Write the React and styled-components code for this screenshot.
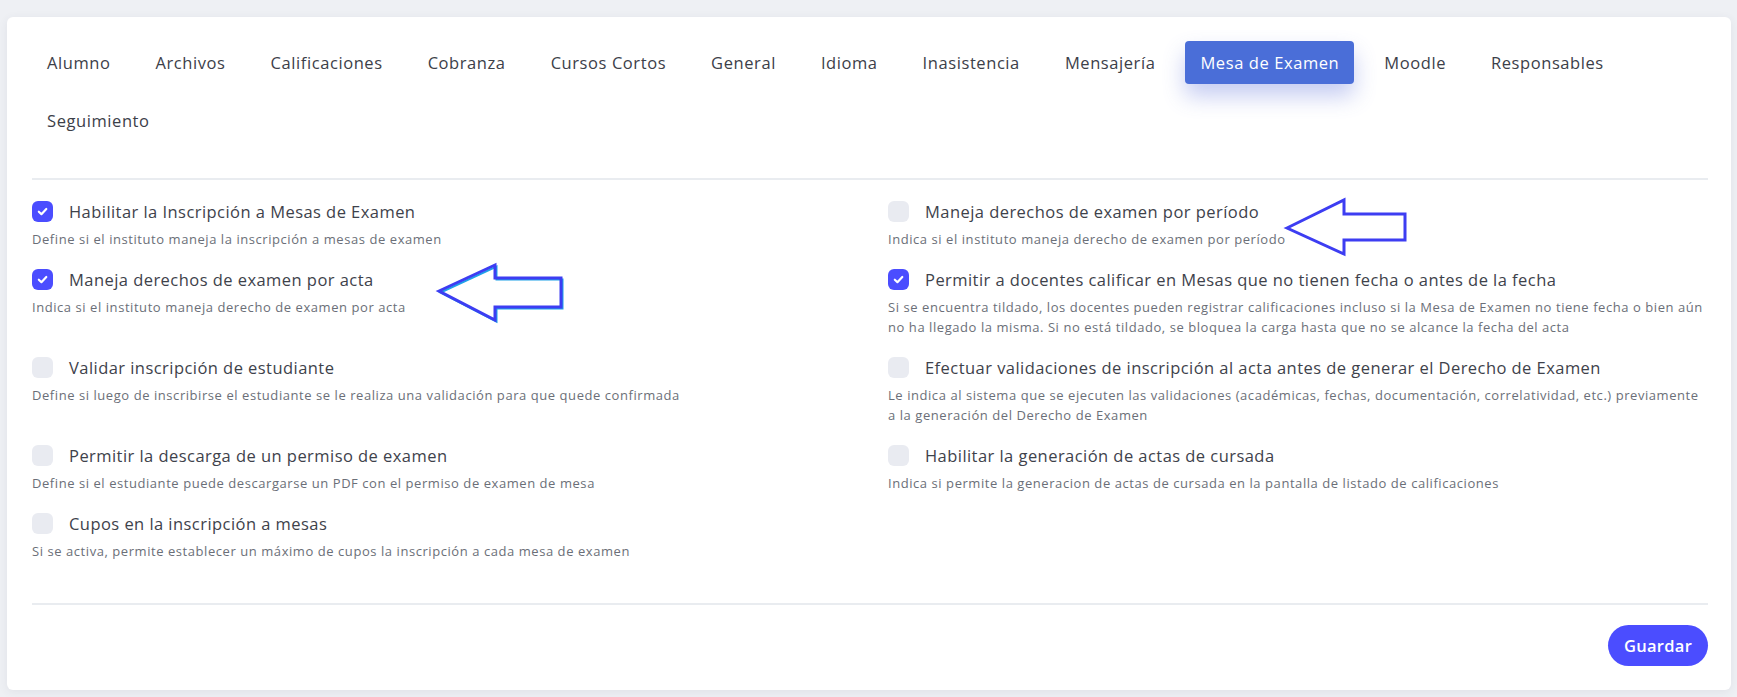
import React from 'react';
import styled, { createGlobalStyle } from 'styled-components';

const GlobalStyle = createGlobalStyle`
  html, body {
    margin: 0;
    padding: 0;
    background: #eef0f4;
    font-family: "Open Sans", "Liberation Sans", sans-serif;
  }
  * { box-sizing: border-box; }
`;

const Page = styled.div`
  padding: 17px 6px 7px 7px;
`;

const Card = styled.div`
  position: relative;
  background: #fff;
  border-radius: 6px;
  box-shadow: 0 2px 10px rgba(60, 70, 90, 0.08);
  padding: 24px 23px 24px 25px;
`;

const Tabs = styled.div`
  display: flex;
  flex-wrap: wrap;
  gap: 15px;
`;

const Tab = styled.div`
  height: 43px;
  line-height: 43px;
  padding: 0 15px;
  border-radius: 4px;
  font-size: 16.5px;
  letter-spacing: 0.58px;
  color: ${p => (p.$active ? '#fff' : '#3c4049')};
  background: ${p => (p.$active ? '#4a6ed8' : 'transparent')};
  box-shadow: ${p => (p.$active ? '0 12px 22px rgba(74, 96, 214, 0.32)' : 'none')};
  white-space: nowrap;
`;

const Divider = styled.div`
  height: 2px;
  background: #e9ecf0;
  margin-top: ${p => p.$top || 0}px;
`;

const Grid = styled.div`
  display: grid;
  grid-template-columns: 1fr 1fr;
  column-gap: 36px;
  row-gap: 19px;
  padding-top: 20px;
`;

const Item = styled.div`
  display: flex;
  flex-direction: column;
`;

const LabelRow = styled.label`
  display: flex;
  align-items: center;
  gap: 16px;
  height: 22px;
`;

const Box = styled.span`
  width: 21px;
  height: 21px;
  border-radius: 6px;
  flex: none;
  display: flex;
  align-items: center;
  justify-content: center;
  background: ${p => (p.$checked ? '#4b4dff' : '#e9ebf1')};
`;

const LabelText = styled.span`
  font-size: 16.5px;
  letter-spacing: 0.45px;
  color: #3e424b;
`;

const Desc = styled.div`
  margin-top: 7px;
  font-size: 13px;
  letter-spacing: 0.56px;
  line-height: 20px;
  color: #6b6f78;
`;

const Footer = styled.div`
  display: flex;
  justify-content: flex-end;
  padding-top: 20px;
`;

const SaveButton = styled.button`
  height: 41px;
  width: 100px;
  border: none;
  border-radius: 21px;
  background: #4b4dff;
  color: #fff;
  font-family: "Open Sans", sans-serif;
  font-weight: 600;
  font-size: 16.5px;
  letter-spacing: 0.3px;
  cursor: pointer;
`;

const ArrowSvg = styled.svg`
  position: absolute;
  overflow: visible;
`;

const Check = () => (
  <svg width="13" height="13" viewBox="0 0 12 12">
    <path d="M2.6 6.2 L5 8.5 L9.5 3.7" fill="none" stroke="#fff" strokeWidth="2" strokeLinecap="round" strokeLinejoin="round" />
  </svg>
);

const Arrow = ({ left, top, w, h, head, s1, s2, tipY, cyan }) => {
  const pts = `0,${tipY} ${head},0 ${head},${s1} ${w},${s1} ${w},${s2} ${head},${s2} ${head},${h}`;
  return (
    <ArrowSvg style={{ left, top }} width={w} height={h} viewBox={`0 0 ${w} ${h}`}>
      {cyan && <polygon points={pts} transform="translate(1.5,1.5)" fill="none" stroke="#1fa2e8" strokeWidth="2" />}
      <polygon points={pts} fill="none" stroke="#3d3df2" strokeWidth="3" strokeLinejoin="miter" />
    </ArrowSvg>
  );
};

const tabs = ['Alumno', 'Archivos', 'Calificaciones', 'Cobranza', 'Cursos Cortos', 'General', 'Idioma',
  'Inasistencia', 'Mensajería', 'Mesa de Examen', 'Moodle', 'Responsables', 'Seguimiento'];

const settings = [
  { label: 'Habilitar la Inscripción a Mesas de Examen', desc: 'Define si el instituto maneja la inscripción a mesas de examen', checked: true },
  { label: 'Maneja derechos de examen por período', desc: 'Indica si el instituto maneja derecho de examen por período', checked: false },
  { label: 'Maneja derechos de examen por acta', desc: 'Indica si el instituto maneja derecho de examen por acta', checked: true },
  { label: 'Permitir a docentes calificar en Mesas que no tienen fecha o antes de la fecha', desc: 'Si se encuentra tildado, los docentes pueden registrar calificaciones incluso si la Mesa de Examen no tiene fecha o bien aún no ha llegado la misma. Si no está tildado, se bloquea la carga hasta que no se alcance la fecha del acta', checked: true },
  { label: 'Validar inscripción de estudiante', desc: 'Define si luego de inscribirse el estudiante se le realiza una validación para que quede confirmada', checked: false },
  { label: 'Efectuar validaciones de inscripción al acta antes de generar el Derecho de Examen', desc: 'Le indica al sistema que se ejecuten las validaciones (académicas, fechas, documentación, correlatividad, etc.) previamente a la generación del Derecho de Examen', checked: false },
  { label: 'Permitir la descarga de un permiso de examen', desc: 'Define si el estudiante puede descargarse un PDF con el permiso de examen de mesa', checked: false },
  { label: 'Habilitar la generación de actas de cursada', desc: 'Indica si permite la generacion de actas de cursada en la pantalla de listado de calificaciones', checked: false },
  { label: 'Cupos en la inscripción a mesas', desc: 'Si se activa, permite establecer un máximo de cupos la inscripción a cada mesa de examen', checked: false },
];

export default function App() {
  return (
    <Page>
      <GlobalStyle />
      <Card>
        <Tabs>
          {tabs.map(t => (
            <Tab key={t} $active={t === 'Mesa de Examen'}>{t}</Tab>
          ))}
        </Tabs>
        <Divider $top={36} />
        <Grid>
          {settings.map(s => (
            <Item key={s.label}>
              <LabelRow>
                <Box $checked={s.checked}>{s.checked && <Check />}</Box>
                <LabelText>{s.label}</LabelText>
              </LabelRow>
              <Desc>{s.desc}</Desc>
            </Item>
          ))}
        </Grid>
        <Divider $top={42} />
        <Footer>
          <SaveButton>Guardar</SaveButton>
        </Footer>
        <Arrow left={432} top={248} w={122} h={55} head={56} s1={13} s2={42} tipY={26} cyan />
        <Arrow left={1280} top={183} w={118} h={54} head={57} s1={14} s2={40} tipY={28} />
      </Card>
    </Page>
  );
}
